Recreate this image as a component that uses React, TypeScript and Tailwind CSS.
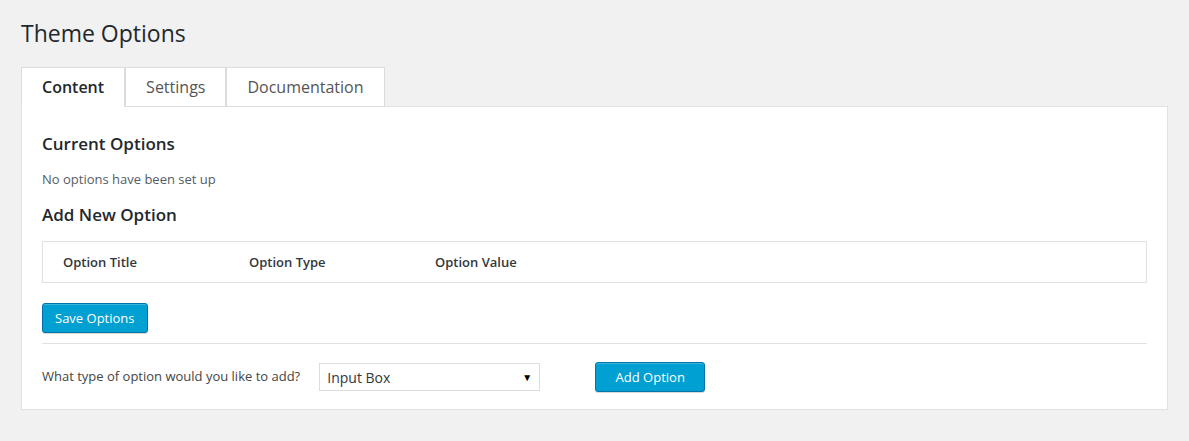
import React from "react";

const font = { fontFamily: '"Open Sans", "Liberation Sans", sans-serif' };

export default function App() {
  return (
    <div
      className="min-h-[441px] w-full bg-[#f1f1f1] pl-[21px] pr-[21px] pt-[19px] pb-[31px] text-[#444]"
      style={font}
    >
      <h1 className="text-[23px] leading-[29px] font-normal text-[#23282d]">Theme Options</h1>

      <div className="mt-[19px] flex">
        <div className="relative z-10 -mb-px box-border h-[40px] border border-[#dcdcdc] border-b-white bg-white px-5 text-[16px] font-semibold leading-[38px] text-[#23282d]">
          Content
        </div>
        <div className="relative z-10 -mb-px box-border h-[40px] border border-[#dcdcdc] bg-white px-5 text-[16px] leading-[38px] text-[#555]">
          Settings
        </div>
        <div className="relative z-10 -mb-px box-border h-[40px] border border-[#dcdcdc] bg-white px-5 text-[16px] leading-[38px] text-[#555]">
          Documentation
        </div>
      </div>

      <div className="border border-[#e2e2e2] bg-white px-5 pt-[25px] pb-[17px]">
        <h3 className="text-[17px] font-semibold leading-[24px] text-[#23282d]">Current Options</h3>
        <p className="mt-[13px] text-[13px] leading-[20px] text-[#555d66]">No options have been set up</p>
        <h3 className="mt-[14px] text-[17px] font-semibold leading-[24px] text-[#23282d]">Add New Option</h3>

        <div className="mt-[14px] flex h-[42px] items-center border border-[#e1e1e1] pl-[20px] pt-px text-[13px] font-semibold text-[#32373c]">
          <div className="w-[186px]">Option Title</div>
          <div className="w-[186px]">Option Type</div>
          <div className="w-[186px]">Option Value</div>
        </div>

        <button className="mt-[20px] box-border h-[30px] rounded-[3px] border border-[#0073aa] bg-[#00a0d2] px-[12px] text-[13px] leading-[28px] text-white shadow-[inset_0_1px_0_rgba(120,200,230,0.5),0_1px_0_rgba(0,0,0,0.15)]">
          Save Options
        </button>

        <div className="mt-[10px] h-px bg-[#e1e1e1]" />

        <div className="mt-[18px] flex h-[30px] items-center">
          <span className="text-[13px] text-[#444]">What type of option would you like to add?</span>
          <div className="ml-[19px] box-border flex h-[28px] w-[221px] items-center justify-between border border-[#dddddd] bg-white pl-[7px] pr-[7px] text-[14px] text-[#32373c]">
            <span>Input Box</span>
            <span className="text-[10px] text-black">▼</span>
          </div>
          <button className="ml-[55px] box-border h-[30px] w-[110px] rounded-[3px] border border-[#0073aa] bg-[#00a0d2] text-[13px] leading-[28px] text-white shadow-[inset_0_1px_0_rgba(120,200,230,0.5),0_1px_0_rgba(0,0,0,0.15)]">
            Add Option
          </button>
        </div>
      </div>
    </div>
  );
}
